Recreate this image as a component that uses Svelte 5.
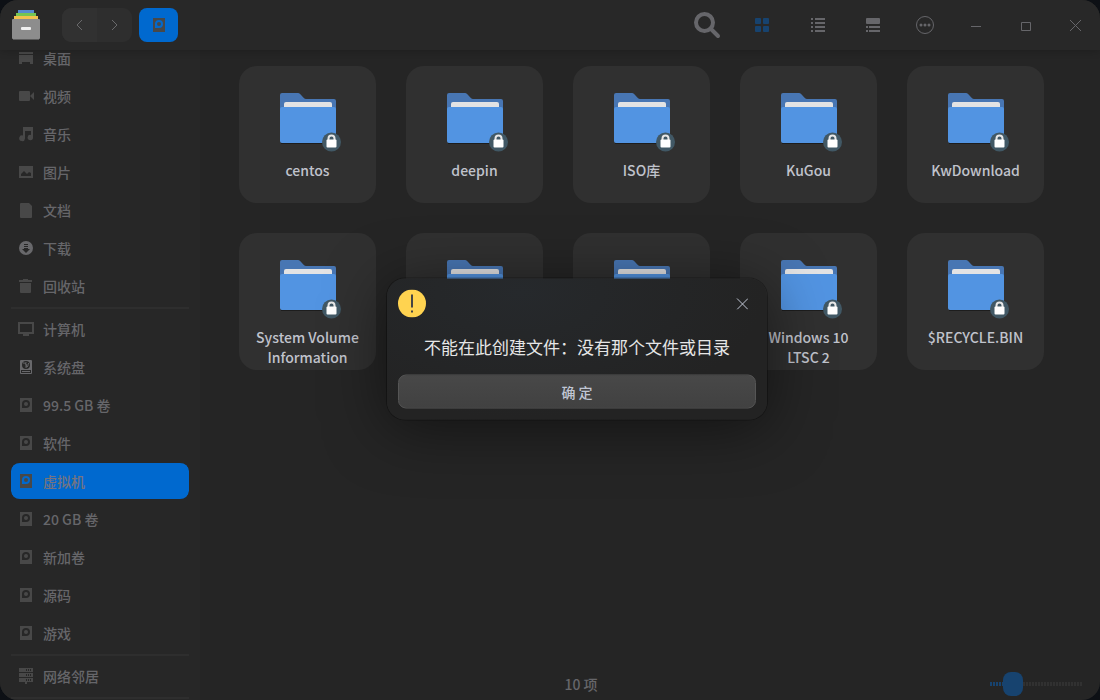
<script lang="ts">
    type Place = { name: string, icon: string };

    const groups: Place[][] = [
        [
            { name: "桌面", icon: "desktop" },
            { name: "视频", icon: "video" },
            { name: "音乐", icon: "music" },
            { name: "图片", icon: "picture" },
            { name: "文档", icon: "document" },
            { name: "下载", icon: "download" },
            { name: "回收站", icon: "trash" }
        ],
        [
            { name: "计算机", icon: "computer" },
            { name: "系统盘", icon: "system" },
            { name: "99.5 GB 卷", icon: "disk" },
            { name: "软件", icon: "disk" },
            { name: "虚拟机", icon: "disk" },
            { name: "20 GB 卷", icon: "disk" },
            { name: "新加卷", icon: "disk" },
            { name: "源码", icon: "disk" },
            { name: "游戏", icon: "disk" }
        ],
        [
            { name: "网络邻居", icon: "network" }
        ]
    ];
    const folders = ["centos", "deepin", "ISO库", "KuGou", "KwDownload", "System Volume Information", "", "", "Windows 10 LTSC 2", "$RECYCLE.BIN"];

    let current = $state("虚拟机");
    let zoom = $state(18);
    let dialogOpen = $state(true);
</script>

{#snippet placeIcon(icon: string)}
    <svg class="place-icon" viewBox="0 0 16 16" width="16" height="16" fill="currentColor" aria-hidden="true">
        {#if icon === "desktop"}
            <path d="M1 2h14v2H1zM1 5h14v9h-3v-2H4v2H1z" />
        {:else if icon === "video"}
            <path d="M2 3h9a1 1 0 0 1 1 1v8a1 1 0 0 1-1 1H2a1 1 0 0 1-1-1V4a1 1 0 0 1 1-1zM12 8l4-4v8z" />
        {:else if icon === "music"}
            <path d="M5 1h10v10.500a2.700 2.700 0 1 1-2-2.600V5H7v7.500A2.900 2.900 0 1 1 5 9.500z" />
        {:else if icon === "picture"}
            <path fill-rule="evenodd" d="M1 2h14v12H1zM3 12h10V9l-2-1-2 2-3-3-3 3z" />
        {:else if icon === "document"}
            <path d="M3 1h8l3 3v11a1 1 0 0 1-1 1H3a1 1 0 0 1-1-1V2a1 1 0 0 1 1-1z" />
        {:else if icon === "download"}
            <circle cx="8" cy="8" r="7" />
            <path class="hole" d="M6 4h4v1H6zM6 6h4v1H6zM6 8h4v1h2l-4 4-4-4h2z" />
        {:else if icon === "trash"}
            <path d="M5 1h5v1h4v2H1V2h4zM2 5h11v9a1 1 0 0 1-1 1H3a1 1 0 0 1-1-1z" />
        {:else if icon === "computer"}
            <path fill-rule="evenodd" d="M0 1h16v12h-5v2H5v-2H0zM2 3v8h12V3z" />
        {:else if icon === "system"}
            <path fill-rule="evenodd" d="M3 1h10a1 1 0 0 1 1 1v12a1 1 0 0 1-1 1H3a1 1 0 0 1-1-1V2a1 1 0 0 1 1-1zM8 2a4 4 0 1 0 0 8 4 4 0 0 0 0-8zM3 11v3h10v-3zM4 12h8v1H4z" />
            <path d="M5 4c3 0 4 1 3 4M8 3c-1 3 1 3 0 6M11 4c-2 1 0 3-2 4" fill="none" stroke="currentColor" />
        {:else if icon === "disk"}
            <path fill-rule="evenodd" d="M2 1h12v14H2zM4 11h4a4 4 0 1 0-4-4z" />
            <circle cx="8" cy="7" r="2" />
        {:else}
            <path d="M1 0h14v4H1zM1 5h14v4H1zM1 10h14v4H9v2H7v-2H1z" />
            <path class="hole" d="M8 1h1v2H8zM10 1h1v2h-1zM12 1h1v2h-1zM8 6h1v2H8zM10 6h1v2h-1zM12 6h1v2h-1zM8 11h1v2H8zM10 11h1v2h-1zM12 11h1v2h-1z" />
        {/if}
    </svg>
{/snippet}

<div class="window">
    <header>
        <svg class="logo" viewBox="0 0 28 30" width="28" height="30" aria-hidden="true">
            <rect x="6" width="16" height="4" fill="#568bd0" />
            <rect x="4" y="3" width="20" height="4" fill="#75c552" />
            <rect x="2" y="6" width="24" height="4" fill="#f1c24e" />
            <rect y="9" width="28" height="20" rx="1" fill="#8d8d8d" />
            <path d="M1 29.500h26" stroke="#5c5c5c" />
            <rect x="9" y="17" width="10" height="3" rx="1" fill="#f0f0f0" />
        </svg>
        <div class="history">
            <button aria-label="后退"><svg viewBox="0 0 7 12" width="7" height="12"><path d="M6 1L1 6l5 5" /></svg></button>
            <button aria-label="前进"><svg viewBox="0 0 7 12" width="7" height="12"><path d="M1 1l5 5-5 5" /></svg></button>
        </div>
        <button class="crumb" aria-label="虚拟机">{@render placeIcon("disk")}</button>

        <div class="tools">
            <button aria-label="搜索">
                <svg viewBox="0 0 27 27" width="27" height="27">
                    <circle cx="10.500" cy="10.500" r="8.500" fill="none" stroke="currentColor" stroke-width="4" />
                    <path d="M17 17l7 7" stroke="currentColor" stroke-width="4" stroke-linecap="round" />
                </svg>
            </button>
            <button class="on" aria-label="图标视图">
                <svg viewBox="0 0 15 14" width="15" height="14" fill="currentColor">
                    <rect width="6" height="6" rx="1" />
                    <rect x="8" width="6" height="6" rx="1" />
                    <rect y="8" width="6" height="6" rx="1" />
                    <rect x="8" y="8" width="6" height="6" rx="1" />
                </svg>
            </button>
            <button aria-label="列表视图">
                <svg viewBox="0 0 15 14" width="15" height="14" fill="currentColor">
                    <path d="M1 0h2v2H1zM5 0h10v2H5zM1 4h2v2H1zM5 4h10v2H5zM1 8h2v2H1zM5 8h10v2H5zM1 12h2v2H1zM5 12h10v2H5z" />
                </svg>
            </button>
            <button aria-label="分栏视图">
                <svg viewBox="0 0 15 14" width="15" height="14" fill="currentColor">
                    <rect x="1" width="14" height="6" rx="1" />
                    <path d="M1 8h2v2H1zM4 8h11v2H4zM1 12h2v2H1zM4 12h11v2H4z" />
                </svg>
            </button>
        </div>
        <div class="window-buttons">
            <button aria-label="菜单">
                <svg viewBox="0 0 18 18" width="18" height="18" fill="currentColor">
                    <circle cx="9" cy="9" r="8.500" fill="none" stroke="currentColor" />
                    <circle cx="5" cy="9" r="1.500" />
                    <circle cx="9" cy="9" r="1.500" />
                    <circle cx="13" cy="9" r="1.500" />
                </svg>
            </button>
            <button aria-label="最小化"><svg viewBox="0 0 12 12" width="12" height="12"><path d="M2 7.500h10" stroke="currentColor" /></svg></button>
            <button aria-label="最大化"><svg viewBox="0 0 12 12" width="12" height="12"><path d="M2.500 3.500h9v8h-9z" fill="none" stroke="currentColor" /></svg></button>
            <button aria-label="关闭"><svg viewBox="0 0 12 12" width="12" height="12"><path d="M1 1l11 11M12 1L1 12" stroke="currentColor" /></svg></button>
        </div>
    </header>

    <div class="body">
        <nav>
            {#each groups as group}
                <ul>
                    {#each group as place}
                        <li>
                            <a href="#{place.icon}" class:active={place.name === current} class:bright={place.icon === "download" || place.icon === "system"} onclick={() => current = place.name}>
                                {@render placeIcon(place.icon)}
                                <span>{place.name}</span>
                            </a>
                        </li>
                    {/each}
                </ul>
            {/each}
        </nav>

        <main>
            <div class="files">
                {#each folders as name}
                    <div class="file">
                        <svg viewBox="0 0 64 60" width="64" height="60" aria-hidden="true">
                            <path d="M4 16V2a2 2 0 0 1 2-2h16c3 0 5 6 8 6h28a2 2 0 0 1 2 2v8z" fill="#4876b3" />
                            <path d="M8 16v-5a2 2 0 0 1 2-2h44a2 2 0 0 1 2 2v5z" fill="#e3e3e4" />
                            <path d="M5 50.500h54" stroke="#1d1d1d" />
                            <path d="M4 16a2 2 0 0 1 2-2h52a2 2 0 0 1 2 2v32a2 2 0 0 1-2 2H6a2 2 0 0 1-2-2z" fill="#5294e2" />
                            <circle cx="55.500" cy="49" r="9.500" fill="#415865" />
                            <path d="M52.500 48v-2.500a3 3 0 0 1 6 0V48" fill="none" stroke="#e8e8e8" stroke-width="2" />
                            <rect x="50.500" y="46.500" width="10" height="8" rx="1" fill="#fff" />
                        </svg>
                        <span>{name}</span>
                    </div>
                {/each}
            </div>
            <footer>
                <span>10 项</span>
                <label><input type="range" min="0" max="100" bind:value={zoom} aria-label="图标大小"></label>
            </footer>
        </main>
    </div>

    {#if dialogOpen}
        <div class="dialog" role="alertdialog" aria-labelledby="message">
            <div class="dialog-top">
                <svg viewBox="0 0 28 28" width="28" height="28" aria-hidden="true">
                    <circle cx="14" cy="14" r="14" fill="#ffd350" />
                    <path d="M13 5h2v13h-2zM13 21h2v2h-2z" fill="#444" />
                </svg>
                <button class="dialog-close" aria-label="关闭" onclick={() => dialogOpen = false}>
                    <svg viewBox="0 0 12 12" width="12" height="12"><path d="M1 1l11 11M12 1L1 12" stroke="currentColor" /></svg>
                </button>
            </div>
            <p id="message">不能在此创建文件：没有那个文件或目录</p>
            <button class="confirm" onclick={() => dialogOpen = false}>确 定</button>
        </div>
    {/if}
</div>

<style>
    :global(body) {
        margin: 0;
        background-color: #0d1015;
    }
    * {
        box-sizing: border-box;
    }
    .window {
        --dim: #66666a;
        --accent: #0069cf;
        position: relative;
        display: flex;
        flex-direction: column;
        height: 100vh;
        overflow: hidden;
        border-radius: 18px;
        background-color: #252525;
        color: var(--dim);
        font-family: "Noto Sans CJK SC", sans-serif;
        font-size: 14px;
        font-weight: 500;
        line-height: 20px;
    }
    button {
        display: flex;
        align-items: center;
        justify-content: center;
        padding: 0;
        border: none;
        background: none;
        color: inherit;
        font: inherit;
    }
    header {
        display: flex;
        flex: none;
        align-items: center;
        height: 50px;
        padding-left: 12px;
        background-color: #282828;
        box-shadow: 0 1px 8px rgba(0, 0, 0, 0.2);
        z-index: 1;
    }
    .history {
        display: flex;
        margin-left: 22px;
        overflow: hidden;
        border-radius: 9px;
        background-color: #2e2e2e;
    }
    .history button {
        width: 35px;
        height: 34px;
    }
    .history button:first-child {
        background-color: #313131;
    }
    .history path {
        fill: none;
        stroke: #69696b;
    }
    .crumb {
        width: 39px;
        height: 34px;
        margin-left: 7px;
        border-radius: 8px;
        background-color: var(--accent);
    }
    .tools, .window-buttons {
        display: flex;
    }
    .tools {
        margin-left: auto;
    }
    .tools button {
        width: 55px;
        height: 50px;
    }
    .window-buttons button {
        width: 50px;
        height: 50px;
    }
    .tools .on {
        color: #17436f;
    }
    .body {
        display: flex;
        flex: 1;
        min-height: 0;
    }
    /* the list is scrolled a little way under the title bar */
    nav {
        width: 200px;
        margin-top: -11px;
        overflow: hidden;
        padding: 0 11px;
        background-color: #272727;
    }
    ul {
        margin: 0;
        padding: 0;
        list-style: none;
    }
    ul::after {
        content: "";
        display: block;
        height: 2px;
        margin: 2px 0 1px;
        background-color: #2e2e2e;
    }
    a {
        display: flex;
        align-items: center;
        gap: 9px;
        height: 38px;
        padding: 0 7px;
        border: solid transparent;
        border-width: 1px 0;
        border-radius: 9px;
        background-clip: padding-box;
        color: inherit;
        text-decoration: none;
    }
    .active {
        background-color: var(--accent);
        color: #757480;
    }
    .place-icon {
        flex: none;
        color: #484848;
    }
    .bright .place-icon {
        color: #68686b;
    }
    .hole {
        fill: #272727;
    }
    main {
        display: flex;
        flex: 1;
        flex-direction: column;
    }
    .files {
        display: grid;
        flex: 1;
        grid-template-columns: repeat(auto-fill, 137px);
        align-content: start;
        gap: 30px;
        padding: 16px 39px;
    }
    .file {
        display: flex;
        flex-direction: column;
        align-items: center;
        gap: 7px;
        height: 137px;
        padding: 27px 16px 0;
        border-radius: 18px;
        background-color: #303030;
        color: #c0c3cc;
        text-align: center;
    }
    .file svg {
        flex: none;
        overflow: visible;
    }
    footer {
        display: flex;
        align-items: center;
        height: 32px;
    }
    footer span {
        flex: 1;
        text-align: center;
    }
    footer label {
        display: flex;
        width: 138px;
        padding: 0 18px 0 28px;
    }
    input {
        width: 100%;
        height: 24px;
        margin: 0;
        appearance: none;
        background:
            repeating-linear-gradient(to right, transparent 0 2px, #262626 2px 3px),
            linear-gradient(to right, #17436f 20px, #313131 20px);
        background-position: center;
        background-repeat: no-repeat;
        background-size: 100% 4px;
    }
    input::-webkit-slider-thumb {
        width: 20px;
        height: 24px;
        appearance: none;
        border-radius: 8px;
        background-color: #17436f;
    }
    .dialog {
        position: absolute;
        top: calc(50% - 1px);
        left: calc(50% + 27px);
        width: 380px;
        transform: translate(-50%, -50%);
        padding: 11px;
        border-radius: 18px;
        background: radial-gradient(ellipse at 35% 10%, #26292c, #232323 70%);
        box-shadow: 0 0 0 1px rgba(0, 0, 0, 0.3), 0 8px 60px rgba(0, 0, 0, 0.5);
        color: #e6e6e6;
        z-index: 2;
    }
    .dialog-top {
        display: flex;
        justify-content: space-between;
    }
    .dialog-close {
        width: 28px;
        height: 28px;
        color: #c0c6d4;
    }
    p {
        margin: 17px 0 16px;
        font-size: 17px;
        font-weight: 400;
        line-height: 24px;
        text-align: center;
    }
    .confirm {
        width: 100%;
        height: 34px;
        border: 1px solid #555;
        border-radius: 8px;
        background: linear-gradient(#484848, #414141);
        color: #c0c6d4;
    }
</style>
